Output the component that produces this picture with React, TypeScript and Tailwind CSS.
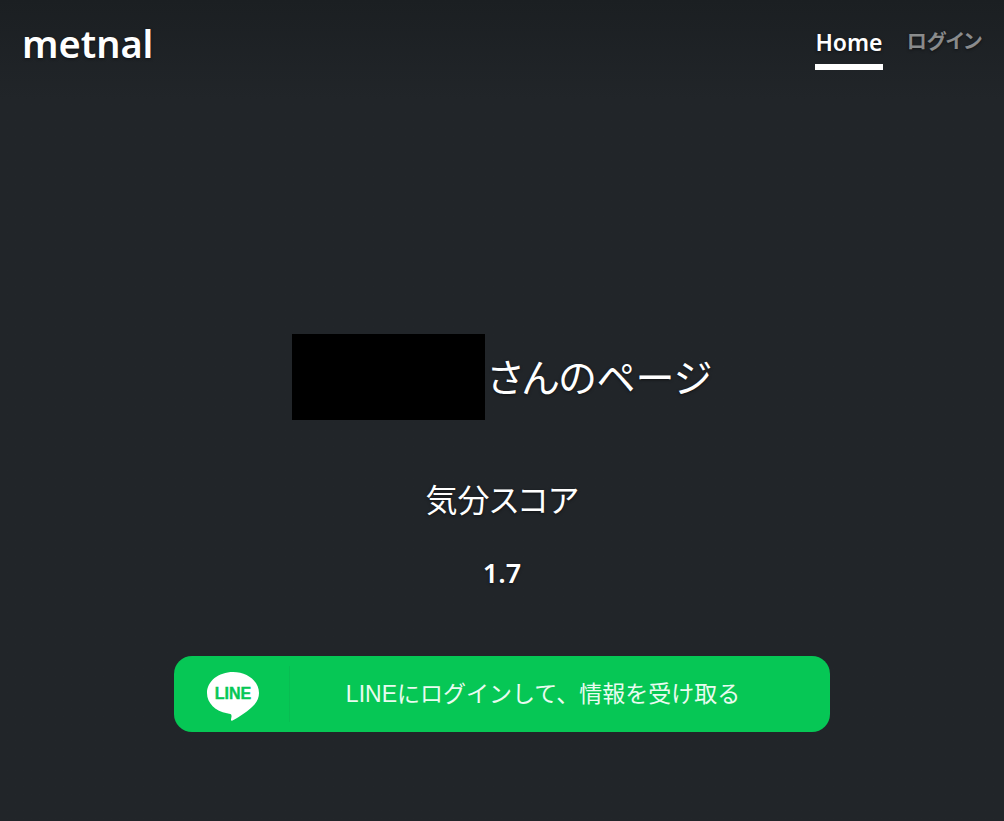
const navItems = [
  { label: "Home", href: "#home", active: true },
  { label: "ログイン", href: "#login", active: false },
];

function LineLogo() {
  return (
    <svg viewBox="0 0 54 50" className="h-[50px] w-[54px]" role="img" aria-label="LINE">
      <path
        d="M27 1C12.600 1 1 10.300 1 22C1 32 9.500 40.500 21 42.300C24.600 42.900 25.800 43.200 25.500 45.500L25 48.500C24.900 49.800 25.600 50 26.500 49.500C34 45.500 43 39.500 48.500 33.500C51.500 30 53 26.300 53 22C53 10.300 41.400 1 27 1Z"
        fill="#fff"
      />
      <text
        x="27"
        y="28"
        textAnchor="middle"
        strokeWidth="0.4"
        className="fill-[#06c755] stroke-[#06c755] font-['Liberation_Sans',sans-serif] text-[16px] font-bold"
      >
        LINE
      </text>
    </svg>
  );
}

function Header() {
  return (
    <header className="flex items-start justify-between">
      <h3 className="text-[38px] leading-[46px] font-semibold">metnal</h3>
      <nav className="flex gap-6 pt-1.5 leading-8 font-semibold">
        {navItems.map((item) => (
          <a
            key={item.label}
            href={item.href}
            className={
              item.active
                ? "border-b-6 border-white pb-1.5 text-[23px]"
                : "border-b-6 border-transparent pb-1.5 text-[20px] text-white/50"
            }
          >
            {item.label}
          </a>
        ))}
      </nav>
    </header>
  );
}

function LineLoginButton() {
  return (
    <button
      type="button"
      className="mx-auto flex h-[76px] w-full max-w-[656px] cursor-pointer items-center rounded-[18px] bg-[#06c755] font-['Liberation_Sans','Noto_Sans_CJK_JP',sans-serif] text-[#e9fbf0] [font-feature-settings:normal] text-shadow-none"
    >
      <span className="flex h-14 w-[116px] items-center border-r border-[#08bd52] pt-1 pl-8">
        <LineLogo />
      </span>
      <span className="flex-1 pr-[34px] text-[23px]">LINEにログインして、情報を受け取る</span>
    </button>
  );
}

export default function App() {
  return (
    <div className="flex min-h-screen flex-col bg-[#212529] bg-linear-to-b from-[#1b1f22] to-[#212529] to-[100px] px-[22px] pt-5 font-['Noto_Sans','Noto_Sans_CJK_JP',sans-serif] text-white [font-feature-settings:'palt'] text-shadow-[0_1px_3px_rgb(0_0_0/0.5)]">
      <Header />

      <main className="mt-auto pb-[89px] text-center">
        {/* Page owner, name hidden */}
        <h1 className="flex items-center justify-center gap-0.5 text-[39px] leading-[54px]">
          <span className="h-[86px] w-[193px] bg-black" />
          さんのページ
        </h1>

        {/* Mood score */}
        <h2 className="mt-14 text-[32px] leading-[48px]">気分スコア</h2>
        <p className="mt-7 mb-[62px] text-[27px] leading-[42px] font-semibold">1.7</p>

        <LineLoginButton />
      </main>
    </div>
  );
}
